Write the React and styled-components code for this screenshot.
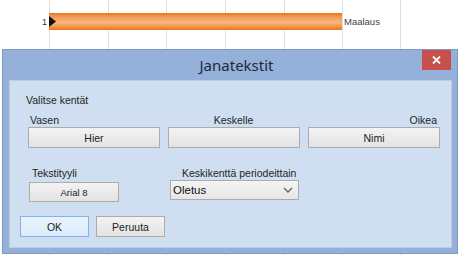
import React from "react";
import styled, { createGlobalStyle } from "styled-components";

const GlobalStyle = createGlobalStyle`
  html, body {
    margin: 0;
    padding: 0;
    background: #ffffff;
  }
  body {
    font-family: "Liberation Sans", Arial, sans-serif;
  }
`;

const GRID = [49, 108, 166, 225, 284, 342, 400];

const Page = styled.div`
  position: relative;
  width: 461px;
  height: 255px;
  overflow: hidden;
  background: #fff;
`;

const Chart = styled.div`
  position: relative;
  height: 255px;
  background-image: ${GRID.map(
    (x) => `linear-gradient(to right, transparent ${x}px, #dedede ${x}px, #dedede ${x + 1}px, transparent ${x + 1}px)`
  ).join(", ")};
`;

const TaskRow = styled.div`
  display: flex;
  align-items: center;
  padding-top: 13px;
  height: 17px;
`;

const RowNumber = styled.span`
  width: 47px;
  text-align: right;
  padding-right: 2px;
  font-size: 9px;
  color: #333;
`;

const Bar = styled.div`
  position: relative;
  width: 293px;
  height: 17px;
  background: linear-gradient(
    to bottom,
    #e9761f 0%,
    #f39447 18%,
    #f6ae74 45%,
    #f7b684 55%,
    #f29749 80%,
    #e8741e 100%
  );
`;

const Marker = styled.svg`
  position: absolute;
  left: 0;
  top: 3px;
`;

const TaskName = styled.span`
  padding-left: 2px;
  font-size: 9.5px;
  color: #444;
`;

const Window = styled.div`
  position: absolute;
  left: 2px;
  top: 49px;
  width: 456px;
  height: 205px;
  box-sizing: border-box;
  border: 1px solid #7f9ac6;
  background: #95b0d9;
  display: flex;
  flex-direction: column;
  padding: 0 5px 5px 6px;
`;

const TitleBar = styled.div`
  position: relative;
  height: 30px;
  display: flex;
  align-items: center;
  justify-content: center;
  padding-left: 12px;
  font-family: "Noto Sans", "Open Sans", sans-serif;
  font-size: 15px;
  color: #1d2a3c;
`;

const CloseButton = styled.div`
  position: absolute;
  right: 1px;
  top: 0;
  width: 29px;
  height: 20px;
  background: #c9504a;
  display: flex;
  align-items: center;
  justify-content: center;
`;

const Panel = styled.div`
  flex: 1;
  background: #cfdef0;
  border: 1px solid #b9cbe6;
  display: flex;
  flex-direction: column;
  padding: 12px 11px 0 10px;
  font-size: 10.5px;
  color: #1f1f1f;
`;

const Heading = styled.div`
  line-height: 14px;
  padding-left: 6px;
`;

const FieldGrid = styled.div`
  display: grid;
  grid-template-columns: repeat(3, 132px);
  column-gap: 8px;
  margin-top: 7px;
  padding-left: 8px;
`;

const FieldLabel = styled.div`
  line-height: 13px;
  text-align: ${(p) => p.$align || "left"};
  padding: 0 3px 0 2px;
`;

const Button = styled.div`
  box-sizing: border-box;
  width: ${(p) => p.$w || "100%"};
  height: ${(p) => p.$h || 21}px;
  display: flex;
  align-items: center;
  justify-content: center;
  border: 1px solid ${(p) => (p.$focus ? "#7eb4ea" : "#acacac")};
  background: ${(p) =>
    p.$focus
      ? "linear-gradient(to bottom, #eaf3fc, #dcecfc)"
      : "linear-gradient(to bottom, #f3f3f3, #e3e3e3)"};
  font-size: ${(p) => p.$fs || 10.5}px;
  color: #222;
`;

const StyleRow = styled.div`
  display: flex;
  align-items: flex-start;
  gap: 51px;
  margin-top: 19px;
  padding-left: 9px;
`;

const Column = styled.div`
  display: flex;
  flex-direction: column;
`;

const SmallLabel = styled.div`
  line-height: 13px;
  padding-left: ${(p) => p.$indent || 0}px;
  margin-bottom: ${(p) => p.$gap || 0}px;
`;

const Select = styled.div`
  box-sizing: border-box;
  width: 129px;
  height: 20px;
  display: flex;
  align-items: center;
  justify-content: space-between;
  padding: 0 5px 0 2px;
  border: 1px solid #acacac;
  background: linear-gradient(to bottom, #f4f4f4, #e6e6e6);
  font-size: 11.5px;
  color: #111;
`;

const Actions = styled.div`
  display: flex;
  gap: 7px;
  margin-top: 14px;
`;

export default function App() {
  return (
    <Page>
      <GlobalStyle />
      <Chart>
        <TaskRow>
          <RowNumber>1</RowNumber>
          <Bar>
            <Marker width="7" height="11" viewBox="0 0 7 11">
              <path d="M0 0 L7 5.5 L0 11 Z" fill="#111" />
            </Marker>
          </Bar>
          <TaskName>Maalaus</TaskName>
        </TaskRow>
      </Chart>
      <Window>
        <TitleBar>
          Janatekstit
          <CloseButton>
            <svg width="9" height="8" viewBox="0 0 9 8">
              <path d="M1 0.5 L8 7.5 M8 0.5 L1 7.5" stroke="#fff" strokeWidth="1.8" />
            </svg>
          </CloseButton>
        </TitleBar>
        <Panel>
          <Heading>Valitse kentät</Heading>
          <FieldGrid>
            <FieldLabel>Vasen</FieldLabel>
            <FieldLabel $align="center">Keskelle</FieldLabel>
            <FieldLabel $align="right">Oikea</FieldLabel>
            <Button>Hier</Button>
            <Button />
            <Button>Nimi</Button>
          </FieldGrid>
          <StyleRow>
            <Column>
              <SmallLabel $indent={3} $gap={2}>Tekstityyli</SmallLabel>
              <Button $w="90px" $h={20} $fs={9.5}>Arial 8</Button>
            </Column>
            <Column>
              <SmallLabel $indent={12}>Keskikenttä periodeittain</SmallLabel>
              <Select>
                Oletus
                <svg width="10" height="6" viewBox="0 0 10 6">
                  <path d="M1 1 L5 5 L9 1" fill="none" stroke="#666" strokeWidth="1.4" />
                </svg>
              </Select>
            </Column>
          </StyleRow>
          <Actions>
            <Button $w="69px" $focus>OK</Button>
            <Button $w="69px">Peruuta</Button>
          </Actions>
        </Panel>
      </Window>
    </Page>
  );
}
